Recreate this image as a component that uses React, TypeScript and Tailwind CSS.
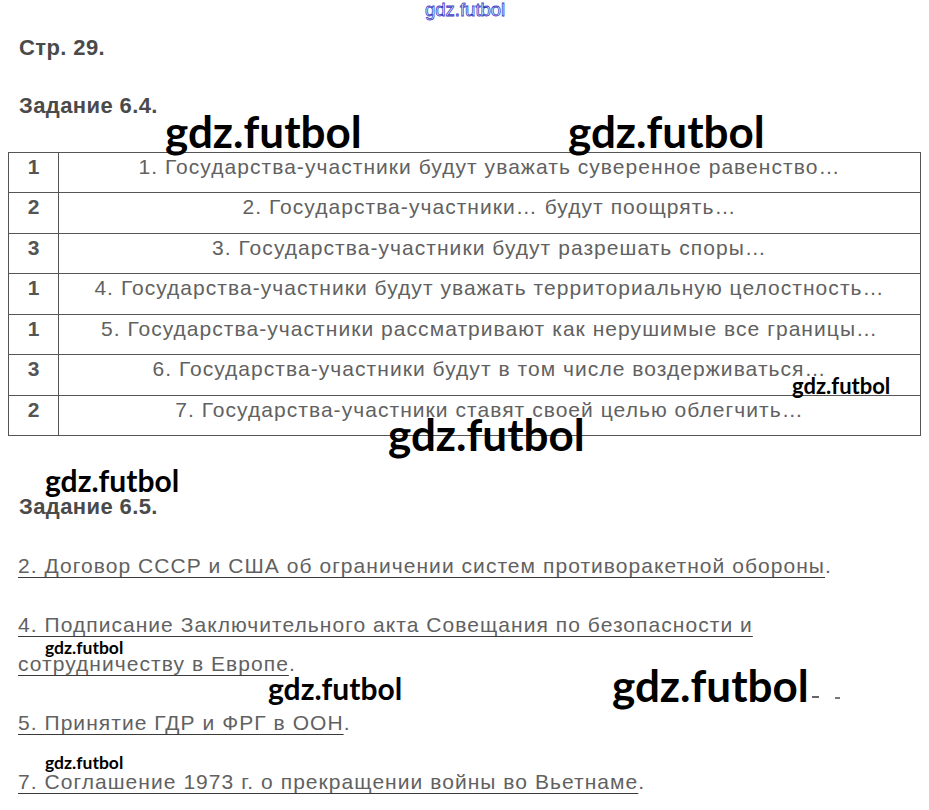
import React from 'react'

const rows = [
  { n: '1', text: '1. Государства-участники будут уважать суверенное равенство…' },
  { n: '2', text: '2. Государства-участники… будут поощрять…' },
  { n: '3', text: '3. Государства-участники будут разрешать споры…' },
  { n: '1', text: '4. Государства-участники будут уважать территориальную целостность…' },
  { n: '1', text: '5. Государства-участники рассматривают как нерушимые все границы…' },
  { n: '3', text: '6. Государства-участники будут в том числе воздерживаться…' },
  { n: '2', text: '7. Государства-участники ставят своей целью облегчить…' },
]

const marks = [
  { cls: 'left-[165px] top-[109px] text-[44px]' },
  { cls: 'left-[568px] top-[109px] text-[44px]' },
  { cls: 'left-[388px] top-[412px] text-[44px]' },
  { cls: 'left-[792px] top-[375px] text-[22px]' },
  { cls: 'left-[45px] top-[465px] text-[30px]' },
  { cls: 'left-[45px] top-[639px] text-[17.5px]' },
  { cls: 'left-[268px] top-[673px] text-[30px]' },
  { cls: 'left-[612px] top-[663px] text-[44px]' },
  { cls: 'left-[45px] top-[754px] text-[17.5px]' },
]

function LinkItem({ children }: { children: React.ReactNode }) {
  return (
    <p className="text-[21px] leading-[39px] tracking-[1.05px] text-[#616161]">
      <span className="underline decoration-1 decoration-[#3a3a3a] underline-offset-[4px]">{children}</span>.
    </p>
  )
}

export default function App() {
  return (
    <div className="relative w-[929px] h-[810px] overflow-hidden bg-white font-['Liberation_Sans',Arial,sans-serif]">
      {/* page content */}
      <div className="pt-[36px]">
        <h2 className="pl-[19px] text-[22px] leading-[24px] tracking-[0.4px] font-bold text-[#4a4a4a]">Стр. 29.</h2>
        <h2 className="pl-[19px] mt-[34px] text-[22px] leading-[24px] tracking-[0.4px] font-bold text-[#4a4a4a]">Задание 6.4.</h2>

        <table className="ml-[8px] mt-[34px] w-[913px] border-collapse border border-[#555]">
          <tbody>
            {rows.map((r, i) => (
              <tr key={i} className="h-[40.43px]">
                <td className="w-[50px] border border-[#555] align-top pt-[2px] text-center text-[21px] leading-[24px] font-bold text-[#555]">
                  {r.n}
                </td>
                <td className="border border-[#555] align-top pt-[2px] text-center text-[21px] leading-[24px] tracking-[1.05px] text-[#616161]">
                  {r.text}
                </td>
              </tr>
            ))}
          </tbody>
        </table>

        <h2 className="pl-[19px] mt-[59px] text-[22px] leading-[24px] tracking-[0.4px] font-bold text-[#4a4a4a]">Задание 6.5.</h2>

        <div className="pl-[18px] mt-[27px] flex flex-col gap-[20px]">
          <LinkItem>2. Договор СССР и США об ограничении систем противоракетной обороны</LinkItem>
          <LinkItem>
            4. Подписание Заключительного акта Совещания по безопасности и<br />
            сотрудничеству в Европе
          </LinkItem>
          <LinkItem>5. Принятие ГДР и ФРГ в ООН</LinkItem>
          <LinkItem>7. Соглашение 1973 г. о прекращении войны во Вьетнаме</LinkItem>
        </div>
      </div>

      {/* watermarks */}
      <div className="absolute left-[425px] top-[1px] text-[18.5px] leading-none text-white [-webkit-text-stroke:0.8px_#3b3bc4]">
        gdz.futbol
      </div>
      {marks.map((m, i) => (
        <div key={i} className={`absolute leading-none font-bold text-black font-['Lato',sans-serif] ${m.cls}`}>
          gdz.futbol
        </div>
      ))}
      <div className="absolute left-[812px] top-[696px] w-[7px] h-[2px] bg-[#666]" />
      <div className="absolute left-[835px] top-[697px] w-[5px] h-[2px] bg-[#777]" />
    </div>
  )
}
